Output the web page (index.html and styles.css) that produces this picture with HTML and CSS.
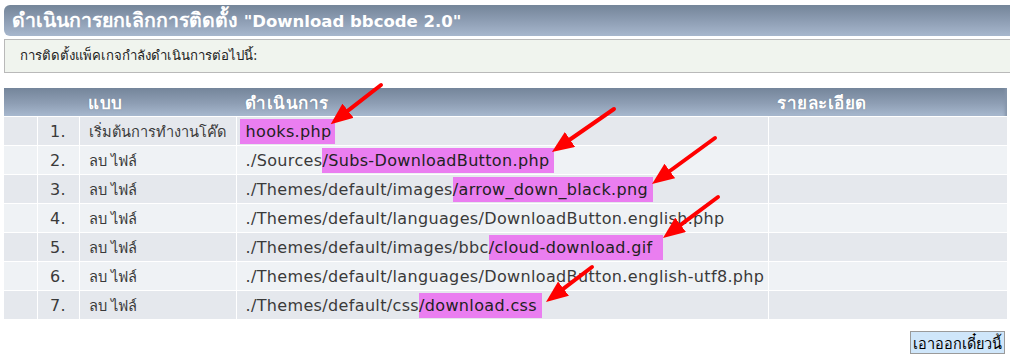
FILE: index.html
```html
<!DOCTYPE html>
<html lang="th">
<head>
<meta charset="utf-8">
<title>ดำเนินการยกเลิกการติดตั้ง</title>
<link rel="stylesheet" href="styles.css">
</head>
<body>
<div class="page">
  <h3 class="titlebar"><span class="th-title">ดำเนินการยกเลิกการติดตั้ง</span> "Download bbcode 2.0"</h3>
  <div class="infobox">การติดตั้งแพ็คเกจกำลังดำเนินการต่อไปนี้:</div>
  <table class="actions">
    <colgroup>
      <col class="c1"><col class="c2"><col class="c3"><col class="c4"><col class="c5">
    </colgroup>
    <thead>
      <tr><th></th><th></th><th>แบบ</th><th>ดำเนินการ</th><th>รายละเอียด</th></tr>
    </thead>
    <tbody>
      <tr class="odd"><td></td><td class="num">1.</td><td class="type">เริ่มต้นการทำงานโค๊ด</td><td class="path"><span class="hl first">hooks.php</span></td><td></td></tr>
      <tr class="even"><td></td><td class="num">2.</td><td class="type">ลบ ไฟล์</td><td class="path">./Sources<span class="hl">/Subs-DownloadButton.php</span></td><td></td></tr>
      <tr class="odd"><td></td><td class="num">3.</td><td class="type">ลบ ไฟล์</td><td class="path">./Themes/default/images<span class="hl">/arrow_down_black.png</span></td><td></td></tr>
      <tr class="even"><td></td><td class="num">4.</td><td class="type">ลบ ไฟล์</td><td class="path">./Themes/default/languages/DownloadButton.english.php</td><td></td></tr>
      <tr class="odd"><td></td><td class="num">5.</td><td class="type">ลบ ไฟล์</td><td class="path">./Themes/default/images/bbc<span class="hl wide">/cloud-download.gif</span></td><td></td></tr>
      <tr class="even"><td></td><td class="num">6.</td><td class="type">ลบ ไฟล์</td><td class="path">./Themes/default/languages/DownloadButton.english-utf8.php</td><td></td></tr>
      <tr class="odd"><td></td><td class="num">7.</td><td class="type">ลบ ไฟล์</td><td class="path">./Themes/default/css<span class="hl">/download.css</span></td><td></td></tr>
    </tbody>
  </table>
  <div class="buttons"><button class="btn" type="button">เอาออกเดี๋ยวนี้</button></div>
</div>
<svg class="arrows" width="1010" height="357" viewBox="0 0 1010 357" aria-hidden="true">
  <defs>
    <marker id="head" markerUnits="userSpaceOnUse" markerWidth="22" markerHeight="18" refX="0" refY="9" orient="auto">
      <path d="M0,0 L22,9 L0,18 z" fill="#ff0000"/>
    </marker>
  </defs>
  <g stroke="#ff0000" stroke-width="4" stroke-linecap="round" marker-end="url(#head)">
    <line x1="381" y1="85" x2="348" y2="110.7"/>
    <line x1="614" y1="109" x2="570" y2="139.5"/>
    <line x1="715" y1="138" x2="669.8" y2="171"/>
    <line x1="718" y1="197" x2="680.6" y2="224.8"/>
    <line x1="592" y1="267" x2="563.5" y2="288.7"/>
  </g>
</svg>
</body>
</html>
```

FILE: styles.css
```css
html, body {
  margin: 0;
  padding: 0;
  background: #ffffff;
  overflow: hidden;
}
body {
  width: 1010px;
  height: 357px;
  position: relative;
  font-family: "DejaVu Sans", Tahoma, sans-serif;
  color: #333333;
}
.page {
  padding: 5px 0 0 4px;
}
.titlebar {
  margin: 0;
  height: 31px;
  width: 1020px;
  box-sizing: border-box;
  padding: 0 0 0 8px;
  line-height: 31px;
  font-size: 16.5px;
  font-weight: bold;
  color: #ffffff;
  border-radius: 6px 0 0 6px;
  background: linear-gradient(to bottom, #748599 0%, #8d9db3 50%, #a7b7cd 100%);
  white-space: nowrap;
}
.th-title {
  font-size: 19.5px;
}
.infobox {
  margin-top: 3px;
  width: 1020px;
  box-sizing: border-box;
  height: 34px;
  line-height: 32px;
  padding-left: 15px;
  font-size: 13.2px;
  color: #222222;
  background: #f0f4ee;
  border: 1px solid #b9b9b9;
  border-right: none;
}
.actions {
  margin-top: 15px;
  width: 1003px;
  border-collapse: collapse;
  table-layout: fixed;
  font-size: 16px;
  color: #3a3a3a;
}
.c1 { width: 33px; }
.c2 { width: 42px; }
.c3 { width: 157px; }
.c4 { width: 532px; }
.c5 { width: auto; }
.actions th {
  height: 28px;
  padding: 0 0 0 9px;
  text-align: left;
  font-size: 17px;
  letter-spacing: 0.5px;
  font-weight: bold;
  color: #ffffff;
  text-shadow: 0 0 1px #5d6d82;
  background: linear-gradient(to bottom, #74859a 0%, #8e9eb4 55%, #a7b8ce 100%);
  border-bottom: 1px solid #ffffff;
}
.actions th:last-child {
  box-shadow: inset -4px 0 3px -2px #8595aa;
}
.actions td {
  height: 28px;
  padding: 0 0 0 9px;
  border: 1px solid #ffffff;
  border-top: none;
  white-space: nowrap;
  vertical-align: middle;
  overflow: visible;
}
.actions td:first-child { border-left: none; }
.actions td:last-child { border-right: none; }
.actions td.num {
  text-align: center;
  padding: 0;
  letter-spacing: 0.3px;
}
.actions td.type {
  font-size: 14.6px;
}
.actions td.path {
  letter-spacing: 0.35px;
}
.odd td { background: #e5e8ed; }
.even td { background: #eff2f5; }
.hl {
  display: inline-block;
  background: #ea7ef0;
  height: 25px;
  line-height: 25px;
  padding-right: 5px;
  color: #222222;
}
.hl.first {
  margin-left: -6px;
  padding-left: 6px;
  padding-right: 3px;
}
.hl.wide {
  padding-right: 10px;
}
.buttons {
  display: flex;
  justify-content: flex-end;
  width: 1001px;
  margin-top: 11px;
}
.btn {
  font-family: "DejaVu Sans", Tahoma, sans-serif;
  font-size: 14.5px;
  color: #000000;
  background: #cfe6fa;
  border: 1px solid #9a9a9a;
  height: 23px;
  padding: 0 2px;
  margin: 0;
}
.arrows {
  position: absolute;
  left: 0;
  top: 0;
  pointer-events: none;
}
```
